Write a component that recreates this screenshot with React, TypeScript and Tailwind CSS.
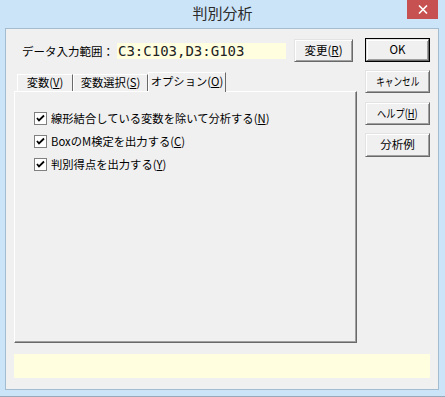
import { ReactNode } from 'react';

const font = { fontFamily: '"Noto Sans CJK JP", "Liberation Sans", sans-serif' };

function Btn({ children, def = false, className = '' }: { children: ReactNode; def?: boolean; className?: string }) {
  const face = (
    <div className="flex-1 flex items-center justify-center border border-t-[#e3e3e3] border-l-[#e3e3e3] border-r-[#696969] border-b-[#696969] bg-[#f0f0f0] shadow-[inset_1px_1px_0_#fff,inset_-1px_-1px_0_#a0a0a0] text-[11.5px] leading-none text-black whitespace-nowrap">
      {children}
    </div>
  );
  if (def) {
    return <div className={`flex border border-black ${className}`}>{face}</div>;
  }
  return <div className={`flex ${className}`}>{face}</div>;
}

function Check({ children }: { children: ReactNode }) {
  return (
    <div className="flex items-center h-[13px] gap-[4px]">
      <div className="w-[13px] h-[13px] border border-[#808080] bg-white flex items-center justify-center shrink-0">
        <svg width="9" height="9" viewBox="0 0 9 9">
          <polyline points="1,4 3,6.5 8,1.5" fill="none" stroke="#000" strokeWidth="1.8" />
        </svg>
      </div>
      <span className="text-[11.3px] leading-none text-black whitespace-nowrap">{children}</span>
    </div>
  );
}

function Tab({ children, active = false, className = '' }: { children: ReactNode; active?: boolean; className?: string }) {
  return (
    <div
      className={`flex items-center justify-center border-t border-l border-t-white border-l-white border-r border-r-[#696969] bg-[#f0f0f0] text-[11.3px] leading-none text-black whitespace-nowrap ${
        active ? 'relative z-10 h-[20px] -mb-px pb-[2px]' : 'h-[17px]'
      } ${className}`}
    >
      {children}
    </div>
  );
}

export default function App() {
  return (
    <div className="relative w-[445px] h-[397px] bg-[#cce4f7] border-b border-[#98a9ba] flex flex-col" style={font}>
      <div className="h-[28px] shrink-0 flex items-center justify-center text-[15px] text-[#2b2b2b] pb-[1px]">
        判別分析
      </div>
      <div className="absolute top-0 right-[7px] w-[31px] h-[19px] bg-[#c75050] flex items-center justify-center">
        <svg width="10" height="9" viewBox="0 0 10 9">
          <path d="M1 0.5 L9 8.5 M9 0.5 L1 8.5" stroke="#fff" strokeWidth="1.6" />
        </svg>
      </div>

      <div className="ml-[5px] w-[434px] h-[362px] border border-[#a4bccf] bg-[#f0f0f0] flex flex-col">
        <div className="flex pt-[9px]">
          <div className="ml-[8px] w-[343px] flex flex-col">
            <div className="flex items-start h-[24px]">
              <span className="ml-[8px] mt-[5px] w-[95px] shrink-0 text-[11.5px] leading-[16px] text-black whitespace-nowrap">
                データ入力範囲：
              </span>
              <div
                className="mt-[5px] w-[169px] h-[16px] bg-[#ffffdf] flex items-center pl-[1px] text-[14px] leading-none text-[#222]"
                style={{ fontFamily: '"DejaVu Sans Mono", monospace' }}
              >
                C3:C103,D3:G103
              </div>
              <Btn className="ml-[8px] mt-[1px] w-[59px] h-[23px]">
                変更(<u>R</u>)
              </Btn>
            </div>

            <div className="flex items-end mt-[10px] pl-[3px]">
              <Tab className="w-[56px]">
                変数(<u>V</u>)
              </Tab>
              <Tab className="w-[75px]">
                変数選択(<u>S</u>)
              </Tab>
              <Tab active className="w-[78px]">
                オプション(<u>O</u>)
              </Tab>
            </div>
            <div className="h-[252px] border-t border-l border-t-white border-l-white border-r border-b border-r-[#696969] border-b-[#696969] shadow-[inset_-1px_-1px_0_#a0a0a0] flex flex-col gap-[10px] pt-[20px] pl-[19px]">
              <Check>
                線形結合している変数を除いて分析する(<u>N</u>)
              </Check>
              <Check>
                BoxのM検定を出力する(<u>C</u>)
              </Check>
              <Check>
                判別得点を出力する(<u>Y</u>)
              </Check>
            </div>
          </div>

          <div className="ml-[8px] w-[65px] flex flex-col">
            <Btn def className="h-[24px]">
              OK
            </Btn>
            <Btn className="mt-[8px] h-[23px]">
              <span className="inline-block scale-x-[0.75]">キャンセル</span>
            </Btn>
            <Btn className="mt-[9px] h-[23px]">
              <span className="inline-block scale-x-[0.8]">
                ヘルプ(<u>H</u>)
              </span>
            </Btn>
            <Btn className="mt-[8px] h-[24px]">分析例</Btn>
          </div>
        </div>

        <div className="ml-[8px] mt-[11px] w-[416px] h-[24px] bg-[#ffffdf]" />
      </div>
    </div>
  );
}
